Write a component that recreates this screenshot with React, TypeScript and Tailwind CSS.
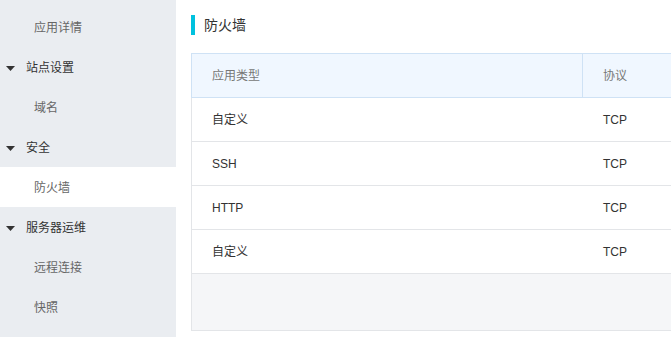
const font = "font-['Liberation_Sans','Noto_Sans_CJK_SC',sans-serif]";

type NavItem = { label: string; group?: boolean; active?: boolean };

const nav: NavItem[] = [
  { label: "应用详情" },
  { label: "站点设置", group: true },
  { label: "域名" },
  { label: "安全", group: true },
  { label: "防火墙", active: true },
  { label: "服务器运维", group: true },
  { label: "远程连接" },
  { label: "快照" },
];

const rules = ["自定义", "SSH", "HTTP", "自定义"];

function Caret() {
  return (
    <svg width="9" height="5" viewBox="0 0 9 5" className="mr-[11px]">
      <path d="M0 0h9L4.5 5z" fill="#333" />
    </svg>
  );
}

export default function App() {
  return (
    <div className={`flex h-[337px] w-[671px] overflow-hidden bg-white text-[12px] ${font}`}>
      <aside className="w-[176px] shrink-0 bg-[#eaedf1] pt-[7px]">
        {nav.map((item) =>
          item.group ? (
            <div key={item.label} className="flex h-10 items-center pl-[6px] pt-[2px] text-[#333]">
              <Caret />
              {item.label}
            </div>
          ) : (
            <div
              key={item.label}
              className={`flex h-10 items-center pl-[34px] pt-[2px] text-[#666] ${item.active ? "bg-white" : ""}`}
            >
              {item.label}
            </div>
          )
        )}
      </aside>

      <main className="min-w-0 flex-1 overflow-hidden pl-[15px] pt-[15px]">
        <div className="flex h-5 items-center border-l-4 border-[#00c1de] pl-[9px] text-[14px] text-[#333]">
          防火墙
        </div>

        <div className="mt-[18px] w-[520px]">
          <div className="flex h-[45px] items-center border border-r-0 border-[#cfe2f5] bg-[#f0f7ff] text-[#777]">
            <div className="flex h-full w-[391px] items-center border-r border-[#cfe2f5] pl-5">应用类型</div>
            <div className="pl-5">协议</div>
          </div>
          {rules.map((name, i) => (
            <div key={i} className="flex h-[44px] items-center border-b border-l border-[#e3e5e8] pt-[1px] text-[#333]">
              <div className="w-[391px] pl-5">{name}</div>
              <div className="pl-5">TCP</div>
            </div>
          ))}
          <div className="h-[57px] border-b border-l border-[#e3e5e8] bg-[#f5f6f8]" />
        </div>
      </main>
    </div>
  );
}
